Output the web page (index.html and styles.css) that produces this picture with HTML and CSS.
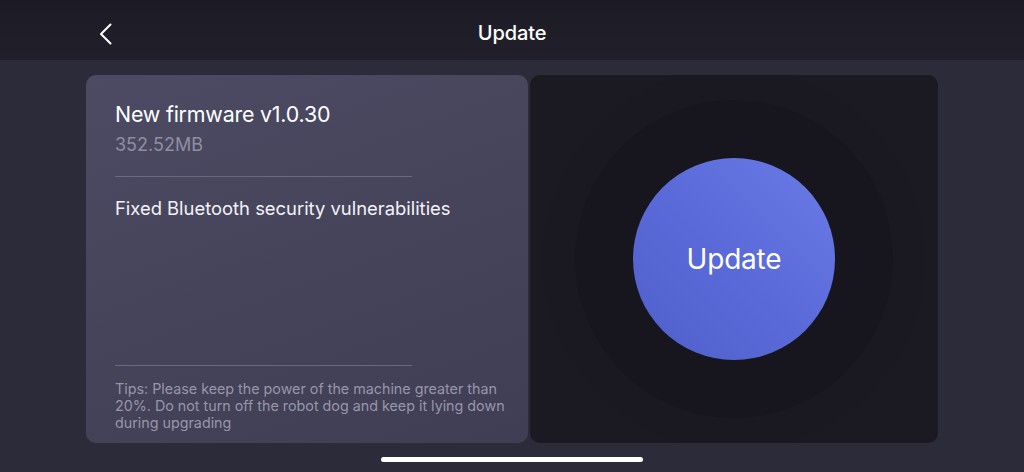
FILE: index.html
```html
<!DOCTYPE html>
<html lang="en">
<head>
    <meta charset="UTF-8">
    <meta name="viewport" content="width=device-width, initial-scale=1.0">
    <title>Update</title>
    <link rel="stylesheet" href="styles.css">
</head>
<body>
    <div class="header">
        <button class="back" aria-label="Back">
            <svg width="14" height="22" viewBox="0 0 14 22">
                <path d="M11.5 1.5 L2 11 L11.5 20.5" fill="none" stroke="#fff" stroke-width="2" stroke-linecap="round" stroke-linejoin="round"/>
            </svg>
        </button>
        <h1>Update</h1>
    </div>

    <div class="main">
        <div class="info-card">
            <h2>New firmware v1.0.30</h2>
            <p class="size">352.52MB</p>
            <hr>
            <p class="changes">Fixed Bluetooth security vulnerabilities</p>
            <div class="spacer"></div>
            <hr>
            <p class="tips">Tips: Please keep the power of the machine greater than 20%. Do not turn off the robot dog and keep it lying down during upgrading</p>
        </div>

        <div class="action-card">
            <div class="ring-outer">
                <div class="ring-inner">
                    <button class="update-btn">Update</button>
                </div>
            </div>
        </div>
    </div>

    <div class="home-bar"></div>
</body>
</html>
```

FILE: styles.css
```css
* {
    box-sizing: border-box;
}
body {
    margin: 0;
    width: 1024px;
    height: 472px;
    overflow: hidden;
    font-family: 'Inter', 'Noto Sans', sans-serif;
    background: #2c2b3a;
    color: #fff;
    display: flex;
    flex-direction: column;
}
.header {
    height: 60px;
    padding-top: 6px;
    background: linear-gradient(180deg, #1c1b25, #201f2b);
    display: flex;
    align-items: center;
    justify-content: center;
    position: relative;
}
.header h1 {
    margin: 0;
    font-size: 20px;
    font-weight: 500;
    letter-spacing: -0.1px;
}
.back {
    position: absolute;
    left: 99px;
    top: 23px;
    padding: 0;
    background: none;
    border: none;
    display: flex;
}
.main {
    display: flex;
    gap: 2px;
    padding: 15px 86px 0;
    height: 383px;
}
.info-card {
    width: 442px;
    height: 368px;
    border-radius: 10px;
    background: linear-gradient(160deg, #4c4b63 0%, #45445b 50%, #3f3e55 100%);
    padding: 26px 29px 12px;
    display: flex;
    flex-direction: column;
}
.info-card h2 {
    margin: 0;
    font-size: 21.4px;
    font-weight: 400;
    letter-spacing: -0.2px;
    line-height: 26px;
}
.size {
    margin: 7px 0 0;
    font-size: 18px;
    line-height: 22px;
    color: #8f8ea3;
}
hr {
    width: 297px;
    margin: 0;
    border: none;
    height: 1px;
    background: #6a6980;
}
.info-card .size + hr {
    margin-top: 20px;
}
.changes {
    margin: 20px 0 0;
    font-size: 18.4px;
    line-height: 22px;
    color: #f2f2f6;
}
.spacer {
    flex: 1;
}
.tips {
    margin: 14px -14px 0 0;
    font-size: 14.3px;
    line-height: 17px;
    color: #9896aa;
}
.action-card {
    width: 408px;
    height: 368px;
    border-radius: 10px;
    background: #1b1a23;
    display: flex;
    align-items: center;
    justify-content: center;
    overflow: hidden;
}
.ring-outer {
    width: 384px;
    height: 384px;
    border-radius: 50%;
    background: radial-gradient(circle, #1a1922 80%, #1c1b25 100%);
    display: flex;
    align-items: center;
    justify-content: center;
    flex-shrink: 0;
}
.ring-inner {
    width: 318px;
    height: 318px;
    border-radius: 50%;
    background: #17161e;
    display: flex;
    align-items: center;
    justify-content: center;
}
.update-btn {
    width: 202px;
    height: 202px;
    border-radius: 50%;
    border: none;
    background: linear-gradient(225deg, #6a7ce6 0%, #5a6ad9 50%, #4f5fc9 100%);
    color: #fff;
    font-family: inherit;
    font-size: 28px;
    font-weight: 400;
    letter-spacing: -0.2px;
    cursor: pointer;
}
.home-bar {
    width: 262px;
    height: 5px;
    border-radius: 3px;
    background: #fff;
    margin: 14px auto 0;
}
```
